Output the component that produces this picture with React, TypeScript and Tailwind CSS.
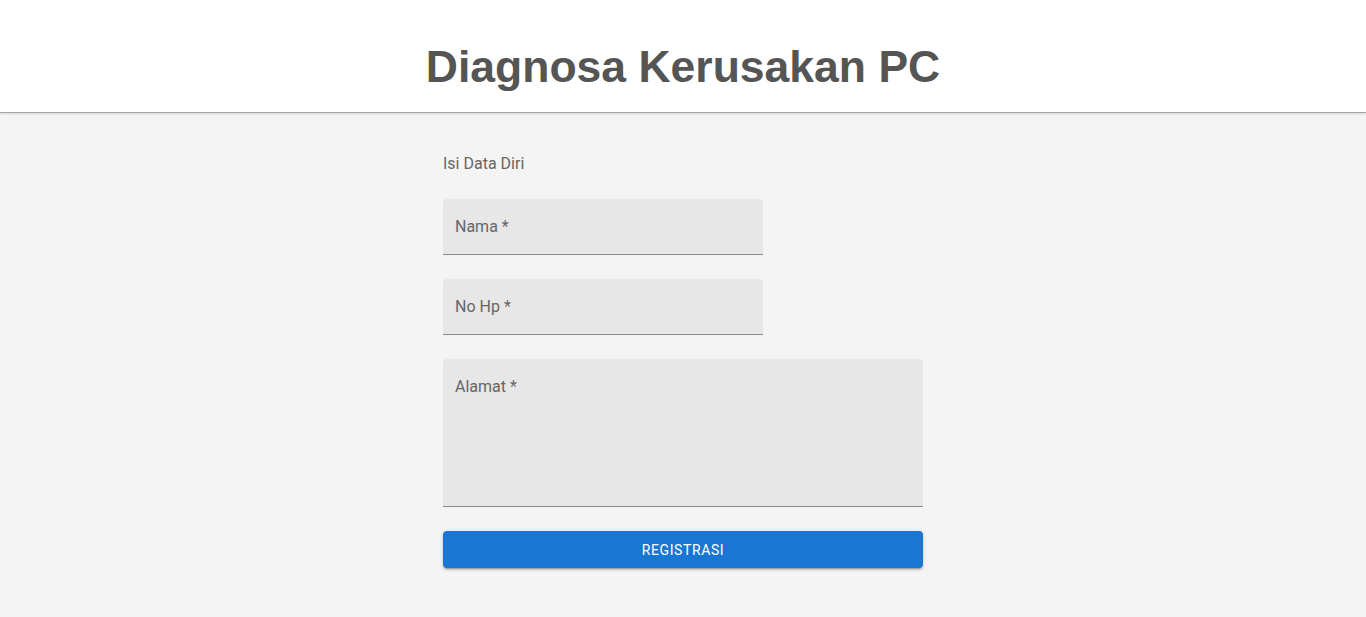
import React from 'react';

const Field = ({ label, className = '' }: { label: string; className?: string }) => (
  <div className={`rounded-t bg-[#e7e7e7] border-b border-[#8a8a8a] px-3 pt-[16px] ${className}`}>
    <span className="text-base text-[#666666]">{label} *</span>
  </div>
);

export default function App() {
  return (
    <div className="min-h-screen bg-[#f4f4f4] font-['Roboto',sans-serif]">
      {/* Header */}
      <header className="h-[113px] bg-white border-b border-[#a5a5a5] shadow-[0_1px_2px_rgba(0,0,0,0.12)] flex items-center justify-center">
        <h1 className="font-['Liberation_Sans',Arial,sans-serif] font-bold text-[44.5px] text-[#555555] leading-none mt-[22px]">
          Diagnosa Kerusakan PC
        </h1>
      </header>

      {/* Form */}
      <main className="w-[480px] mx-auto pt-[41px] flex flex-col">
        <p className="text-base text-[#666666] leading-5">Isi Data Diri</p>
        <Field label="Nama" className="w-[320px] h-[56px] mt-[25px]" />
        <Field label="No Hp" className="w-[320px] h-[56px] mt-[24px]" />
        <Field label="Alamat" className="w-full h-[148px] mt-[24px]" />
        <button className="mt-[24px] h-[37px] w-full rounded bg-[#1976d2] text-white text-sm font-normal uppercase tracking-[0.6px] shadow-[0_3px_1px_-2px_rgba(0,0,0,0.2),0_2px_2px_0_rgba(0,0,0,0.14),0_1px_5px_0_rgba(0,0,0,0.12)]">
          Registrasi
        </button>
      </main>
    </div>
  );
}
